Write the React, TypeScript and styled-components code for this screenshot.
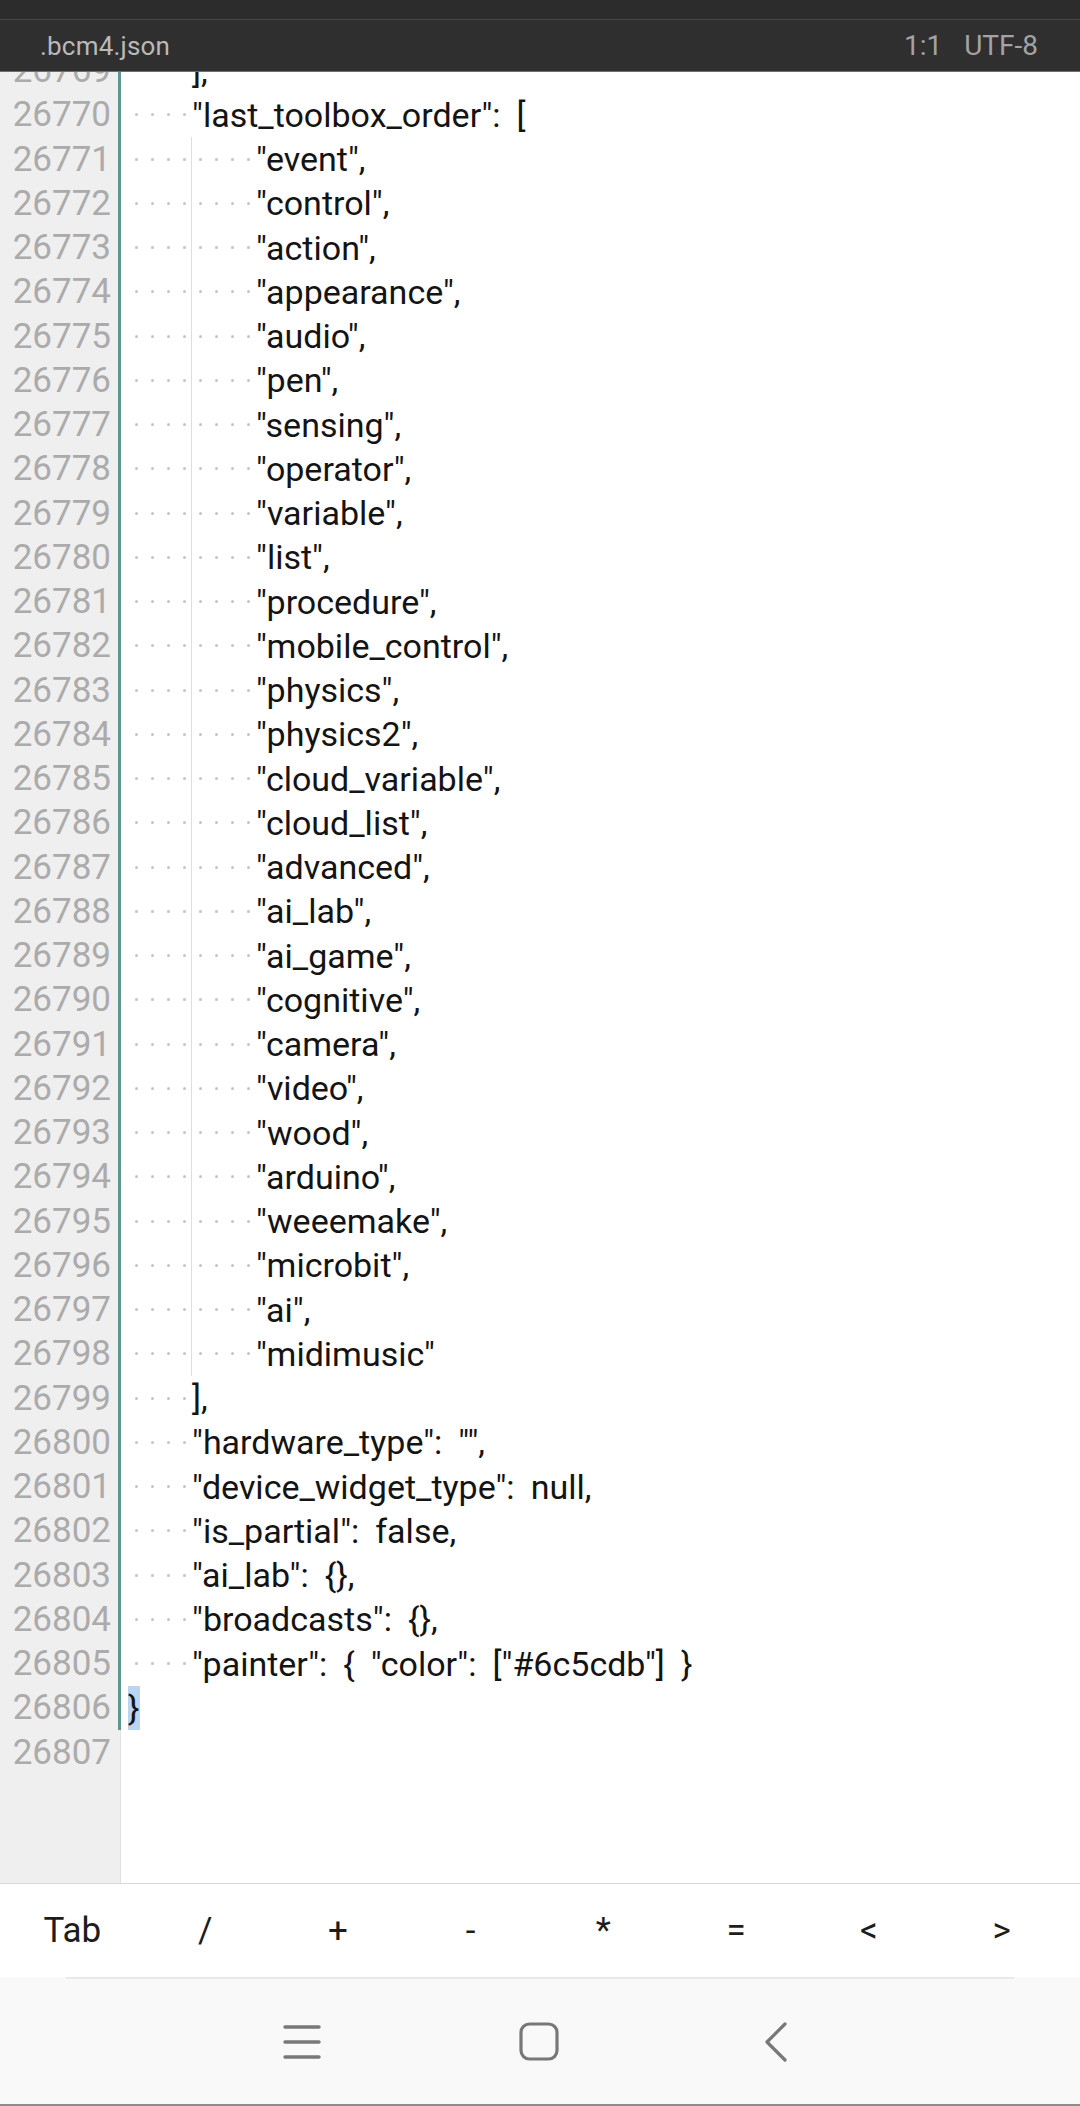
import React from "react";
import styled, { createGlobalStyle, css } from "styled-components";

const GlobalStyle = createGlobalStyle`
  html, body { margin: 0; padding: 0; background: #ffffff; }
  body { font-family: Roboto, "Noto Sans", sans-serif; }
  * { box-sizing: border-box; }
`;

const Screen = styled.div`
  width: 1080px;
  height: 2106px;
  display: flex;
  flex-direction: column;
  overflow: hidden;
  background: #ffffff;
`;

const StatusBar = styled.div`
  height: 20px;
  flex-shrink: 0;
  background: #2c2c2c;
  border-bottom: 1px solid #474747;
`;

const TitleBar = styled.div`
  height: 52px;
  flex-shrink: 0;
  background: #2f2f2f;
  border-bottom: 1px solid #6f6f6f;
  display: flex;
  align-items: center;
  justify-content: space-between;
  padding: 0 42px 0 40px;
  font-family: Roboto, "Noto Sans", sans-serif;
  color: #b9b9b9;
`;

const FileName = styled.span`
  font-size: 26px;
  letter-spacing: 0.2px;
`;

const StatusGroup = styled.div`
  display: flex;
  align-items: center;
  gap: 22px;
  font-size: 28px;
  color: #a3a3a3;
`;

const Editor = styled.div`
  flex: 1;
  overflow: hidden;
  background: linear-gradient(
    to right,
    #efefef 0 120px,
    #e1e1e1 120px 121px,
    #ffffff 121px
  );
`;

const Lines = styled.div`
  margin-top: -23.4px;
  display: flex;
  flex-direction: column;
`;

const Row = styled.div`
  display: flex;
  height: 44.25px;
  flex-shrink: 0;
`;

const Gutter = styled.div<{ $marked?: boolean }>`
  width: 121px;
  flex-shrink: 0;
  padding-right: 10px;
  display: flex;
  align-items: center;
  justify-content: flex-end;
  font-family: Roboto, "Noto Sans", sans-serif;
  font-size: 35px;
  color: #ababab;
  ${(p) =>
    p.$marked &&
    css`
      background: linear-gradient(to right, transparent 0 118px, #5e9792 118px);
    `}
`;

const Content = styled.div`
  flex: 1;
  display: flex;
  align-items: stretch;
  padding-left: 7px;
`;

const IndentCell = styled.span<{ $guide?: boolean }>`
  width: 16px;
  flex-shrink: 0;
  display: flex;
  align-items: center;
  justify-content: center;
  ${(p) =>
    p.$guide &&
    css`
      box-shadow: inset -1px 0 0 #dedede;
    `}
  &::before {
    content: "";
    width: 3px;
    height: 3px;
    border-radius: 50%;
    background: #c4c4c4;
  }
`;

const Code = styled.span<{ $hl?: boolean }>`
  display: flex;
  align-items: center;
  white-space: pre;
  word-spacing: 7.6px;
  font-family: Roboto, "Noto Sans", sans-serif;
  font-size: 34px;
  color: #141414;
  ${(p) =>
    p.$hl &&
    css`
      background: #b9d5f1;
    `}
`;

const KeyBar = styled.div`
  height: 94px;
  flex-shrink: 0;
  border-top: 1px solid #d9d9d9;
  background: #ffffff;
  display: grid;
  grid-template-columns: repeat(8, 1fr);
  padding: 0 12px 0 6px;
`;

const Key = styled.div`
  display: flex;
  align-items: center;
  justify-content: center;
  font-family: Roboto, "Noto Sans", sans-serif;
  font-size: 35px;
  color: #1c1c1c;
`;

const NavBar = styled.div`
  height: 129px;
  flex-shrink: 0;
  background: #f9f9f9;
  border-bottom: 2px solid #8c8c8c;
  display: flex;
  flex-direction: column;
`;

const NavDivider = styled.div`
  height: 2px;
  margin: 0 66px;
  background: #e9e9e9;
`;

const NavIcons = styled.div`
  flex: 1;
  display: flex;
  align-items: center;
  justify-content: center;
  gap: 177px;
  padding-right: 2px;
`;

const NavButton = styled.div`
  width: 60px;
  height: 60px;
  display: flex;
  align-items: center;
  justify-content: center;
  color: #787878;
`;

type Line = {
  n: number;
  level: number;
  text: string;
  guide?: boolean;
  marked?: boolean;
  hl?: boolean;
};

const items = [
  "event",
  "control",
  "action",
  "appearance",
  "audio",
  "pen",
  "sensing",
  "operator",
  "variable",
  "list",
  "procedure",
  "mobile_control",
  "physics",
  "physics2",
  "cloud_variable",
  "cloud_list",
  "advanced",
  "ai_lab",
  "ai_game",
  "cognitive",
  "camera",
  "video",
  "wood",
  "arduino",
  "weeemake",
  "microbit",
  "ai",
  "midimusic",
];

const lines: Line[] = [
  { n: 26769, level: 1, text: "],", marked: true },
  { n: 26770, level: 1, text: '"last_toolbox_order": [', marked: true },
  ...items.map((it, i) => ({
    n: 26771 + i,
    level: 2,
    text: `"${it}"${i < items.length - 1 ? "," : ""}`,
    guide: true,
    marked: true,
  })),
  { n: 26799, level: 1, text: "],", marked: true },
  { n: 26800, level: 1, text: '"hardware_type": "",', marked: true },
  { n: 26801, level: 1, text: '"device_widget_type": null,', marked: true },
  { n: 26802, level: 1, text: '"is_partial": false,', marked: true },
  { n: 26803, level: 1, text: '"ai_lab": {},', marked: true },
  { n: 26804, level: 1, text: '"broadcasts": {},', marked: true },
  { n: 26805, level: 1, text: '"painter": { "color": ["#6c5cdb"] }', marked: true },
  { n: 26806, level: 0, text: "}", marked: true, hl: true },
  { n: 26807, level: 0, text: "" },
];

const keys = ["Tab", "/", "+", "-", "*", "=", "<", ">"];

const MenuIcon = () => (
  <svg width="40" height="36" viewBox="0 0 40 36" fill="none">
    <g stroke="currentColor" strokeWidth="3.4" strokeLinecap="round">
      <line x1="3" y1="3" x2="37" y2="3" />
      <line x1="3" y1="18" x2="37" y2="18" />
      <line x1="3" y1="33" x2="37" y2="33" />
    </g>
  </svg>
);

const HomeIcon = () => (
  <svg width="40" height="39" viewBox="0 0 40 39" fill="none">
    <rect
      x="2"
      y="2"
      width="36"
      height="35"
      rx="8.5"
      stroke="currentColor"
      strokeWidth="3.2"
    />
  </svg>
);

const BackIcon = () => (
  <svg width="26" height="40" viewBox="0 0 26 40" fill="none">
    <polyline
      points="22,2 4,20 22,38"
      stroke="currentColor"
      strokeWidth="3.2"
      strokeLinecap="round"
      strokeLinejoin="round"
    />
  </svg>
);

export default function App() {
  return (
    <>
      <GlobalStyle />
      <Screen>
        <StatusBar />
        <TitleBar>
          <FileName>.bcm4.json</FileName>
          <StatusGroup>
            <span>1:1</span>
            <span>UTF-8</span>
          </StatusGroup>
        </TitleBar>
        <Editor>
          <Lines>
            {lines.map((l) => (
              <Row key={l.n}>
                <Gutter $marked={l.marked}>{l.n}</Gutter>
                <Content>
                  {Array.from({ length: l.level * 4 }).map((_, i) => (
                    <IndentCell key={i} $guide={l.guide && i === 3} />
                  ))}
                  {l.text && <Code $hl={l.hl}>{l.text}</Code>}
                </Content>
              </Row>
            ))}
          </Lines>
        </Editor>
        <KeyBar>
          {keys.map((k) => (
            <Key key={k}>{k}</Key>
          ))}
        </KeyBar>
        <NavBar>
          <NavDivider />
          <NavIcons>
            <NavButton>
              <MenuIcon />
            </NavButton>
            <NavButton>
              <HomeIcon />
            </NavButton>
            <NavButton>
              <BackIcon />
            </NavButton>
          </NavIcons>
        </NavBar>
      </Screen>
    </>
  );
}
